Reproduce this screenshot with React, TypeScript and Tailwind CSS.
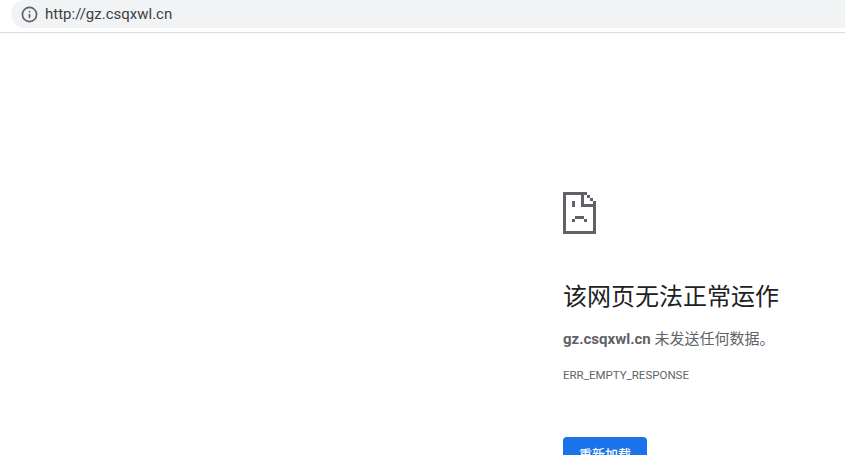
import { Info } from 'lucide-react';

function SadTabIcon() {
  return (
    <svg width="34" height="42" viewBox="0 0 34 42" fill="#5f6368" shapeRendering="crispEdges" className="block">
      <path d="M0 0h24v3h3v3h3v3h3v33H0V0zm3 3v36h27V15H18V3H3zm18 0v9h9V9h-3V6h-3V3h-3z" fillRule="evenodd" />
      <rect x="9" y="9" width="3" height="6" />
      <rect x="9" y="27" width="3" height="3" />
      <rect x="12" y="24" width="9" height="3" />
      <rect x="21" y="27" width="3" height="3" />
    </svg>
  );
}

export default function App() {
  return (
    <div className="h-[455px] overflow-hidden bg-white font-['Roboto','Noto_Sans_CJK_SC',sans-serif]">
      <div className="h-[33px] border-b border-[#dadce0] pl-[11px]">
        <div className="flex h-[28px] items-center gap-[7px] rounded-l-[14px] bg-[#f1f3f4] pl-[10px]">
          <Info size={17} strokeWidth={2.4} className="text-[#5f6368]" />
          <span className="text-[15px] text-[#3c4043]">http://gz.csqxwl.cn</span>
        </div>
      </div>
      <main className="pl-[563px] pt-[159px]">
        <SadTabIcon />
        <h1 className="mt-[47px] text-[24px] leading-[32px] font-normal text-[#202124] whitespace-nowrap">
          该网页无法正常运作
        </h1>
        <p className="mt-[14px] text-[15px] leading-[24px] text-[#5f6368] whitespace-nowrap">
          <strong>gz.csqxwl.cn</strong> 未发送任何数据。
        </p>
        <div className="mt-[15px] text-[11.5px] leading-[18px] text-[#5f6368]">ERR_EMPTY_RESPONSE</div>
        <button className="mt-[53px] h-[36px] w-[84px] rounded-[4px] bg-[#1a73e8] text-[13px] font-medium text-white">
          重新加载
        </button>
      </main>
    </div>
  );
}
